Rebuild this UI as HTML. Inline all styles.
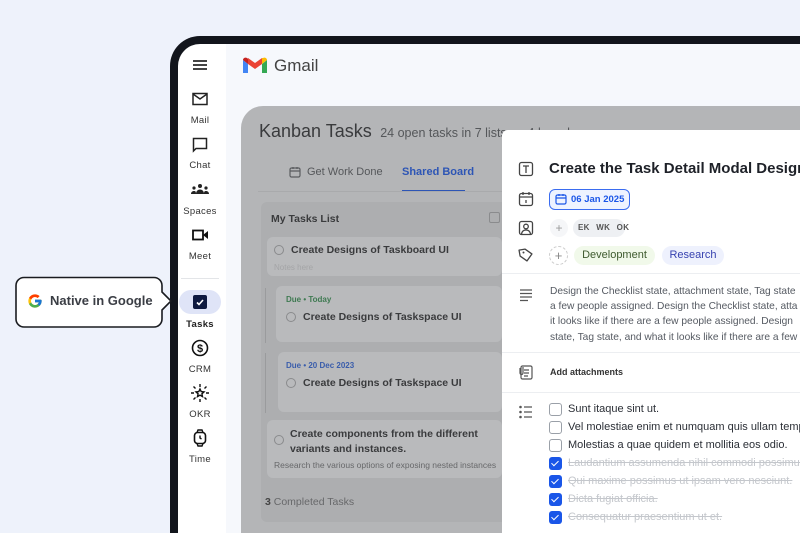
<!DOCTYPE html>
<html style="overflow:hidden"><head><meta charset="utf-8"><style>
*{box-sizing:border-box;margin:0;padding:0}
html,body{width:800px;height:533px;overflow:hidden}
body{background:#eef2fb;font-family:"Liberation Sans",sans-serif}
#w{position:relative;width:800px;height:533px;overflow:hidden}
.abs{position:absolute}
.frame{left:170px;top:36px;width:630px;height:497px;background:#12151c;border-radius:30px 0 0 0}
.side{left:178px;top:44px;width:48px;height:489px;background:#fff;border-radius:22px 0 0 0}
.main{left:226px;top:44px;width:574px;height:489px;background:#f6f8fc}
.nav{position:absolute;left:178px;width:44px;text-align:center;font-size:9.5px;color:#333;letter-spacing:.3px}
.ov{left:241px;top:106px;width:559px;height:427px;background:#b4b5b7;border-radius:22px 0 0 0}
.t{color:#3a3b3d}
.card{background:#b9babc;border-radius:6px}
.modal{left:502px;top:130px;width:298px;height:403px;background:#fff;border-radius:6px 0 0 0}
.ic{position:absolute;left:518px;width:16px;height:16px}
.chk{position:absolute;left:549px;width:13px;height:13px;border-radius:3px}
.un{border:1.3px solid #9aa0a8;background:#fff}
.ck{background:#1a56e8}
.ck:after{content:"";position:absolute;left:4px;top:1.5px;width:3px;height:6px;border:solid #fff;border-width:0 1.6px 1.6px 0;transform:rotate(45deg)}
.ci{position:absolute;left:568px;font-size:11px;color:#2b2f36;white-space:nowrap;line-height:13px}
.done{color:#c4c7cc;text-decoration:line-through}
</style></head><body><div id="w">
<div class="abs frame"></div>
<div class="abs main"></div>
<div class="abs side"></div>
<div class="abs" style="left:193px;top:60px;width:14px;height:2px;background:#444;box-shadow:0 4px 0 #444,0 8px 0 #444"></div>
<svg class="abs" style="left:192px;top:92px" width="16" height="14" viewBox="0 0 16 14"><rect x="1" y="1.5" width="14" height="11" fill="none" stroke="#222" stroke-width="1.5"/><path d="M1 2l7 5 7-5" fill="none" stroke="#222" stroke-width="1.5"/></svg>
<div class="nav" style="top:115px">Mail</div>
<svg class="abs" style="left:192px;top:137px" width="16" height="16" viewBox="0 0 16 16"><path d="M1.5 1.5h13v10H4l-2.5 2.5z" fill="none" stroke="#222" stroke-width="1.5"/></svg>
<div class="nav" style="top:160px">Chat</div>
<svg class="abs" style="left:190px;top:183px" width="20" height="12" viewBox="0 0 20 12"><circle cx="10" cy="3" r="2" fill="#222"/><circle cx="4" cy="5" r="1.6" fill="#222"/><circle cx="16" cy="5" r="1.6" fill="#222"/><path d="M6 11c0-3 2-4.5 4-4.5s4 1.5 4 4.5z" fill="#222"/><path d="M1 11c0-2 1.5-3 3-3s2 .5 2 3zM19 11c0-2-1.5-3-3-3s-2 .5-2 3z" fill="#222"/></svg>
<div class="nav" style="top:206px">Spaces</div>
<svg class="abs" style="left:192px;top:229px" width="17" height="12" viewBox="0 0 17 12"><rect x="1" y="1.5" width="10" height="9" fill="none" stroke="#111" stroke-width="1.8"/><path d="M11 6l5-4v8z" fill="#111"/></svg>
<div class="nav" style="top:251px">Meet</div>
<div class="abs" style="left:181px;top:278px;width:38px;height:1px;background:#e3e5e8"></div>
<div class="abs" style="left:179px;top:290px;width:42px;height:24px;border-radius:12px;background:#dfe4f7"></div>
<div class="abs" style="left:193px;top:295px;width:14px;height:14px;background:#0f1a40;border-radius:2px"></div>
<svg class="abs" style="left:193px;top:295px" width="14" height="14"><path d="M4 7.5l2 2 4-4.5" fill="none" stroke="#fff" stroke-width="1.6"/></svg>
<div class="nav" style="top:319px;font-weight:bold;color:#222">Tasks</div>
<svg class="abs" style="left:191px;top:339px" width="18" height="18" viewBox="0 0 18 18"><circle cx="9" cy="9" r="7.5" fill="none" stroke="#111" stroke-width="1.6"/><text x="9" y="13" font-size="11" text-anchor="middle" font-family="Liberation Sans" font-weight="bold" fill="#111">$</text></svg>
<div class="nav" style="top:364px">CRM</div>
<svg class="abs" style="left:191px;top:384px" width="18" height="18" viewBox="0 0 18 18"><path d="M9 5l1.2 2.6 2.8.3-2.1 1.9.6 2.8L9 11.2 6.5 12.6l.6-2.8L5 7.9l2.8-.3z" fill="none" stroke="#111" stroke-width="1.4"/><path d="M9 0v3M9 15v3M0 9h3M15 9h3M2.5 2.5l2 2M13.5 13.5l2 2M2.5 15.5l2-2M13.5 4.5l2-2" stroke="#111" stroke-width="1.4"/></svg>
<div class="nav" style="top:409px">OKR</div>
<svg class="abs" style="left:193px;top:429px" width="14" height="18" viewBox="0 0 14 18"><rect x="1.5" y="3.5" width="11" height="11" rx="3" fill="none" stroke="#111" stroke-width="1.6"/><path d="M4 3.5l1-2.5h4l1 2.5M4 14.5l1 2.5h4l1-2.5M7 6.5V9l1.5 1" fill="none" stroke="#111" stroke-width="1.4"/></svg>
<div class="nav" style="top:454px">Time</div>
<svg class="abs" style="left:14px;top:276px" width="160" height="52" viewBox="0 0 160 52"><path d="M10 1.5h130a8 8 0 0 1 8 8V16l9 9-9 9v9a8 8 0 0 1-8 8H10a8 8 0 0 1-8-8V9.5a8 8 0 0 1 8-8z" fill="#fff" stroke="#1a1c20" stroke-width="1.6"/></svg>
<svg class="abs" style="left:27px;top:293px" width="16" height="16" viewBox="0 0 48 48"><path d="M43.6 20.5H42V20H24v8h11.3C33.7 32.7 29.2 36 24 36c-6.6 0-12-5.4-12-12s5.4-12 12-12c3.1 0 5.8 1.2 8 3l5.7-5.7C34 6.1 29.3 4 24 4 13 4 4 13 4 24s9 20 20 20 20-9 20-20c0-1.3-.1-2.6-.4-3.5z" fill="#FFC107"/><path d="M6.3 14.7l6.6 4.8C14.7 15.1 19 12 24 12c3.1 0 5.8 1.2 8 3l5.7-5.7C34 6.1 29.3 4 24 4 16.3 4 9.7 8.3 6.3 14.7z" fill="#FF3D00"/><path d="M24 44c5.2 0 9.9-2 13.4-5.2l-6.2-5.2C29.2 35.1 26.7 36 24 36c-5.2 0-9.6-3.3-11.3-8l-6.5 5C9.5 39.6 16.2 44 24 44z" fill="#4CAF50"/><path d="M43.6 20.5H42V20H24v8h11.3c-.8 2.2-2.2 4.2-4.1 5.6l6.2 5.2C37 39.2 44 34 44 24c0-1.3-.1-2.6-.4-3.5z" fill="#1976D2"/></svg>
<div class="abs" style="left:50px;top:293px;font-size:13px;font-weight:bold;color:#3a3d44">Native in Google</div>
<svg class="abs" style="left:243px;top:57px" width="24" height="18" viewBox="0 0 24 18"><path d="M0 3v13h5V7z" fill="#4285f4"/><path d="M19 7v9h5V3z" fill="#34a853"/><path d="M19 1v6l5-4c0-2-2.5-3-4-2z" fill="#fbbc04"/><path d="M5 7V1l7 5 7-5v6l-7 5z" fill="#ea4335"/><path d="M0 3c0-2 2.5-3 4-2l1 .8V7z" fill="#c5221f"/></svg>
<div class="abs" style="left:274px;top:56px;font-size:17px;color:#444">Gmail</div>
<div class="abs ov"></div>
<div class="abs t" style="left:259px;top:121px;font-size:18px;white-space:nowrap">Kanban Tasks <span style="font-size:12.5px;color:#55575a">&nbsp;24 open tasks in 7 lists on 4 boards</span></div>
<svg class="abs" style="left:289px;top:166px" width="12" height="12"><rect x="1" y="2" width="10" height="9" rx="1.5" fill="none" stroke="#5a5c5f" stroke-width="1.2"/><path d="M1 5h10M4 1v2M8 1v2" stroke="#5a5c5f" stroke-width="1.2"/></svg>
<div class="abs" style="left:307px;top:166px;font-size:11px;color:#55575a">Get Work Done</div>
<div class="abs" style="left:402px;top:166px;font-size:11px;color:#2d55b5;font-weight:bold">Shared Board</div>
<div class="abs" style="left:402px;top:190px;width:63px;height:2px;background:#2d55b5"></div>
<div class="abs" style="left:258px;top:191px;width:244px;height:1px;background:#a9aaac"></div>
<div class="abs" style="left:261px;top:202px;width:241px;height:320px;background:#adaeb0;border-radius:6px 0 0 6px"></div>
<div class="abs t" style="left:271px;top:213px;font-size:10.5px;font-weight:bold">My Tasks List</div>
<div class="abs" style="left:489px;top:212px;width:11px;height:11px;border:1px solid #8a8b8d;border-radius:2px"></div>
<div class="abs card" style="left:267px;top:237px;width:235px;height:39px"></div>
<div class="abs" style="left:274px;top:245px;width:10px;height:10px;border:1.2px solid #8a8b8d;border-radius:50%"></div>
<div class="abs t" style="left:291px;top:244px;font-size:10.5px;font-weight:bold">Create Designs of Taskboard UI</div>
<div class="abs" style="left:274px;top:263px;font-size:8px;color:#a4a5a7">Notes here</div>
<div class="abs" style="left:265px;top:288px;width:1px;height:55px;background:#9a9b9d"></div>
<div class="abs card" style="left:276px;top:286px;width:226px;height:56px"></div>
<div class="abs" style="left:286px;top:295px;font-size:8px;font-weight:bold;color:#3f7a52">Due • Today</div>
<div class="abs" style="left:286px;top:312px;width:10px;height:10px;border:1.2px solid #8a8b8d;border-radius:50%"></div>
<div class="abs t" style="left:303px;top:311px;font-size:10.5px;font-weight:bold">Create Designs of Taskspace UI</div>
<div class="abs" style="left:265px;top:353px;width:1px;height:60px;background:#9a9b9d"></div>
<div class="abs card" style="left:278px;top:352px;width:224px;height:60px"></div>
<div class="abs" style="left:286px;top:361px;font-size:8px;font-weight:bold;color:#3a5dab">Due • 20 Dec 2023</div>
<div class="abs" style="left:286px;top:378px;width:10px;height:10px;border:1.2px solid #8a8b8d;border-radius:50%"></div>
<div class="abs t" style="left:303px;top:377px;font-size:10.5px;font-weight:bold">Create Designs of Taskspace UI</div>
<div class="abs card" style="left:267px;top:420px;width:235px;height:58px"></div>
<div class="abs" style="left:274px;top:435px;width:10px;height:10px;border:1.2px solid #8a8b8d;border-radius:50%"></div>
<div class="abs t" style="left:290px;top:427px;font-size:10.5px;font-weight:bold;line-height:15px">Create components from the different<br>variants and instances.</div>
<div class="abs" style="left:274px;top:460px;width:228px;overflow:hidden;font-size:8.5px;color:#67686a;white-space:nowrap">Research the various options of exposing nested instances</div>
<div class="abs" style="left:265px;top:496px;font-size:10.5px;color:#67686a"><b style="color:#444">3</b> Completed Tasks</div>
<div class="abs modal"></div>
<div class="abs" style="left:502px;top:130px;width:298px;height:403px;overflow:hidden">
<svg class="ic" style="top:31px;left:16px" viewBox="0 0 16 16"><rect x="1.5" y="1.5" width="13" height="13" rx="2" fill="none" stroke="#444" stroke-width="1.3"/><path d="M5 5h6M8 5v7" stroke="#444" stroke-width="1.3"/></svg>
<div class="abs" style="left:47px;top:30px;font-size:15px;font-weight:bold;color:#1e2128;white-space:nowrap">Create the Task Detail Modal Designs</div>
<svg class="ic" style="top:61px;left:16px" viewBox="0 0 16 16"><rect x="1.5" y="2.5" width="13" height="12" rx="2" fill="none" stroke="#444" stroke-width="1.3"/><path d="M1.5 6h13M5 1v3M11 1v3M8 9v3" stroke="#444" stroke-width="1.3"/></svg>
<div class="abs" style="left:47px;top:59px;width:81px;height:21px;border:1.3px solid #3a6cf0;border-radius:6px;background:#eef3ff"></div>
<svg class="abs" style="left:53px;top:63px" width="12" height="12"><rect x="1" y="2" width="10" height="9" rx="1.5" fill="none" stroke="#1a56e8" stroke-width="1.2"/><path d="M1 5h10M4 1v2M8 1v2" stroke="#1a56e8" stroke-width="1.2"/></svg>
<div class="abs" style="left:69px;top:64px;font-size:9.5px;font-weight:bold;color:#1a56e8">06 Jan 2025</div>
<svg class="ic" style="top:90px;left:16px" viewBox="0 0 16 16"><rect x="1.5" y="1.5" width="13" height="13" rx="2" fill="none" stroke="#444" stroke-width="1.3"/><circle cx="8" cy="6.5" r="2.3" fill="none" stroke="#444" stroke-width="1.3"/><path d="M3.5 14c.5-3 2.5-4 4.5-4s4 1 4.5 4" fill="none" stroke="#444" stroke-width="1.3"/></svg>
<div class="abs" style="left:48px;top:89px;width:18px;height:18px;border-radius:50%;background:#f5f6f8;color:#999;font-size:12px;text-align:center;line-height:18px">+</div>
<div class="abs" style="left:71px;top:89px;width:52px;height:18px;border-radius:9px;background:#eef0f3"></div>
<div class="abs" style="left:76px;top:93px;font-size:8px;font-weight:bold;color:#555;letter-spacing:.3px;word-spacing:4px">EK WK OK</div>
<svg class="ic" style="top:117px;left:16px" viewBox="0 0 16 16"><path d="M2 2h6l6 6-6 6-6-6z" fill="none" stroke="#444" stroke-width="1.3" stroke-linejoin="round" transform="rotate(-10 8 8)"/><circle cx="5.5" cy="5.5" r="1" fill="#444"/></svg>
<div class="abs" style="left:47px;top:116px;width:19px;height:19px;border-radius:50%;border:1px dashed #ccc;color:#888;font-size:13px;text-align:center;line-height:17px">+</div>
<div class="abs" style="left:72px;top:116px;width:81px;height:19px;border-radius:10px;background:#f1f9ea;color:#3e5a2e;font-size:11px;text-align:center;line-height:19px">Development</div>
<div class="abs" style="left:160px;top:116px;width:62px;height:19px;border-radius:10px;background:#eef1fd;color:#3742b0;font-size:11px;text-align:center;line-height:19px">Research</div>
<div class="abs" style="left:0;top:143px;width:298px;height:1px;background:#eceef1"></div>
<svg class="ic" style="top:157px;left:16px" viewBox="0 0 16 16"><path d="M2 3h12M2 6.5h12M2 10h12M2 13.5h8" stroke="#555" stroke-width="1.3"/></svg>
<div class="abs" style="left:48px;top:154px;font-size:10.2px;line-height:15.2px;color:#555a62;white-space:nowrap">Design the Checklist state, attachment state, Tag state<br>a few people assigned. Design the Checklist state, atta<br>it looks like if there are a few people assigned. Design<br>state, Tag state, and what it looks like if there are a few</div>
<div class="abs" style="left:0;top:222px;width:298px;height:1px;background:#eceef1"></div>
<svg class="ic" style="top:234px;left:16px" viewBox="0 0 16 16"><rect x="3" y="2" width="11" height="13" rx="1.5" fill="none" stroke="#555" stroke-width="1.2"/><path d="M6 6h5M6 9h5M6 12h4M2 4v5a1.5 1.5 0 0 0 3 0V3" fill="none" stroke="#555" stroke-width="1.2"/></svg>
<div class="abs" style="left:48px;top:237px;font-size:9px;font-weight:bold;color:#333">Add attachments</div>
<div class="abs" style="left:0;top:262px;width:298px;height:1px;background:#eceef1"></div>
<svg class="ic" style="top:274px;left:16px" viewBox="0 0 16 16"><circle cx="2.5" cy="3" r="1.3" fill="#555"/><circle cx="2.5" cy="8" r="1.3" fill="#555"/><circle cx="2.5" cy="13" r="1.3" fill="#555"/><path d="M6 3h8M6 8h8M6 13h8" stroke="#555" stroke-width="1.3"/></svg>
</div>
<div class="chk un" style="top:403px"></div><div class="ci" style="top:403px">Sunt itaque sint ut.</div>
<div class="chk un" style="top:421px"></div><div class="ci" style="top:421px">Vel molestiae enim et numquam quis ullam tempo</div>
<div class="chk un" style="top:439px"></div><div class="ci" style="top:439px">Molestias a quae quidem et mollitia eos odio.</div>
<div class="chk ck" style="top:457px"></div><div class="ci done" style="top:457px">Laudantium assumenda nihil commodi possimus</div>
<div class="chk ck" style="top:475px"></div><div class="ci done" style="top:475px">Qui maxime possimus ut ipsam vero nesciunt.</div>
<div class="chk ck" style="top:493px"></div><div class="ci done" style="top:493px">Dicta fugiat officia.</div>
<div class="chk ck" style="top:511px"></div><div class="ci done" style="top:511px">Consequatur praesentium ut et.</div>
</div></body></html>
